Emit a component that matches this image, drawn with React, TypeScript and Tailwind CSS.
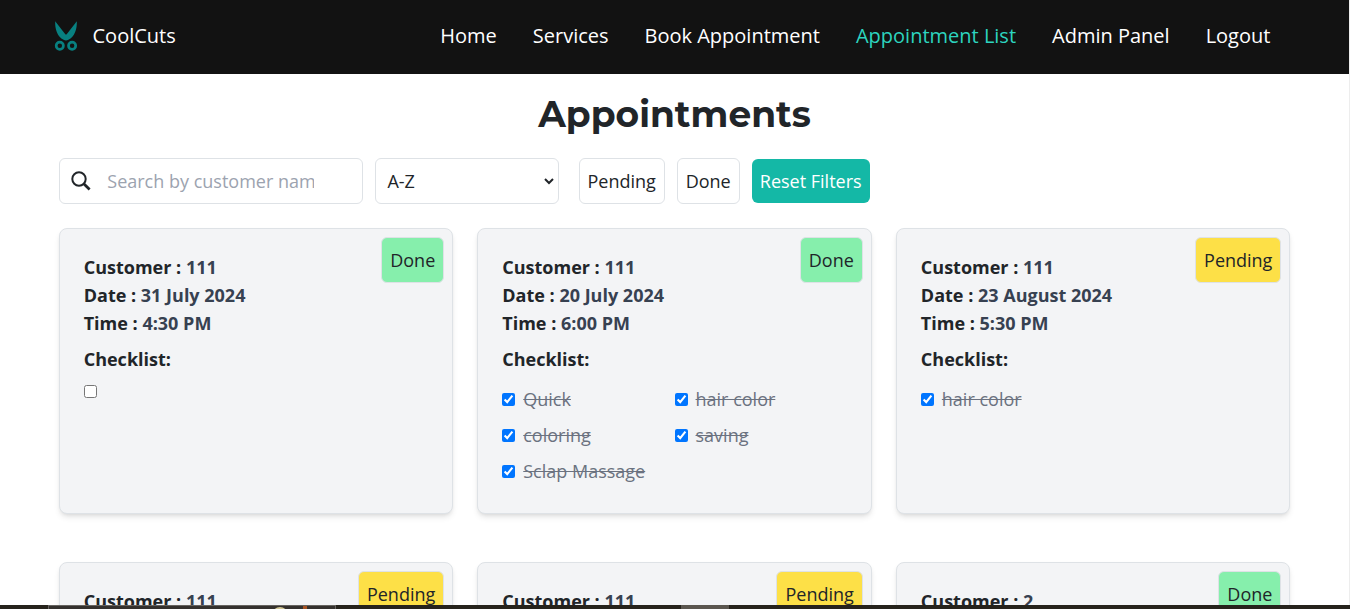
import React from "react";

type Item = { label: string; done: boolean };
type Appointment = {
  customer: string;
  date: string;
  time: string;
  done: boolean;
  items: Item[];
};

const struck = (label: string): Item => ({ label, done: true });

const appointments: Appointment[] = [
  { customer: "111", date: "31 July 2024", time: "4:30 PM", done: true, items: [{ label: "", done: false }] },
  {
    customer: "111",
    date: "20 July 2024",
    time: "6:00 PM",
    done: true,
    items: [struck("Quick"), struck("hair color"), struck("coloring"), struck("saving"), struck("Sclap Massage")],
  },
  { customer: "111", date: "23 August 2024", time: "5:30 PM", done: false, items: [struck("hair color")] },
  { customer: "111", date: "", time: "", done: false, items: [] },
  { customer: "111", date: "", time: "", done: false, items: [] },
  { customer: "2", date: "", time: "", done: true, items: [] },
];

const links = ["Home", "Services", "Book Appointment", "Appointment List", "Admin Panel", "Logout"];

function Logo() {
  return (
    <svg width="24" height="32" viewBox="0 0 24 32" fill="none" className="shrink-0">
      <path d="M1.2 1.2C.8 9 3.4 16.8 9.6 19.8Q12 21 14.4 19.8C20.6 16.8 23.2 9 22.8 1.2L12.9 13.9Q12 15 11.1 13.9Z" fill="#088080" />
      <circle cx="5.8" cy="25.8" r="3.6" stroke="#088080" strokeWidth="2.7" />
      <circle cx="18.1" cy="25.8" r="3.6" stroke="#088080" strokeWidth="2.7" />
    </svg>
  );
}

function SearchIcon() {
  return (
    <svg width="20" height="20" viewBox="0 0 20 20" fill="none" stroke="#212529" className="shrink-0">
      <circle cx="8" cy="8" r="6.7" strokeWidth="2" />
      <path d="M12.8 12.8L18.6 18.4" strokeWidth="2.8" />
    </svg>
  );
}

function Navbar() {
  return (
    <nav className="flex h-[74px] items-center justify-between bg-[#121212] pr-[78.6px] pl-[54px] text-[20px] text-white">
      <div className="flex items-center gap-[14.5px] pb-[3px]">
        <Logo />
        <span>CoolCuts</span>
      </div>
      <ul className="flex gap-9 pb-[3px]">
        {links.map((link) => (
          <li key={link} className={link === "Appointment List" ? "text-[#2dd4bf]" : ""}>
            {link}
          </li>
        ))}
      </ul>
    </nav>
  );
}

function Filters() {
  return (
    <div className="mt-[19px] flex h-[46px] items-center text-[18px]">
      <div className="flex h-[46px] w-[304px] items-center rounded-md border border-[#dee2e6] pl-[11.6px]">
        <SearchIcon />
        <input
          placeholder="Search by customer name"
          className="ml-4 w-[207px] bg-transparent outline-none placeholder:text-[#9ca3af]"
        />
      </div>
      <div className="ml-3 flex h-[46px] w-[184px] items-center justify-between rounded-md border border-[#dee2e6] pr-[4px] pl-[11.7px]">
        <span>A-Z</span>
        <svg width="10" height="7" viewBox="0 0 10 7" fill="none" stroke="#212529" strokeWidth="2">
          <path d="M1 1L5 5L9 1" />
        </svg>
      </div>
      <button className="ml-5 h-[46px] w-[86px] rounded-md border border-[#dee2e6]">Pending</button>
      <button className="ml-3 h-[46px] w-[63px] rounded-md border border-[#dee2e6]">Done</button>
      <button className="ml-3 h-11 w-[118px] whitespace-nowrap rounded-md bg-[#14b8a6] text-white">Reset Filters</button>
    </div>
  );
}

function Checkbox({ checked }: { checked: boolean }) {
  return <input type="checkbox" defaultChecked={checked} className="m-0 size-[13px] shrink-0" />;
}

function Card({ a }: { a: Appointment }) {
  return (
    <article className="relative h-[286px] rounded-lg border border-[#dee2e6] bg-[#f3f4f6] p-6 shadow-md">
      <span
        className={`absolute top-2 right-2 flex h-[46px] items-center rounded-md border border-[#dee2e6] px-2 ${
          a.done ? "bg-[#86efac]" : "bg-[#fde047]"
        }`}
      >
        {a.done ? "Done" : "Pending"}
      </span>
      <div className="font-bold">
        <p>
          Customer : <span className="text-[#374151]">{a.customer}</span>
        </p>
        {a.date && (
          <>
            <p>
              Date : <span className="text-[#374151]">{a.date}</span>
            </p>
            <p>
              Time : <span className="text-[#374151]">{a.time}</span>
            </p>
            <p className="mt-2">Checklist:</p>
          </>
        )}
      </div>
      <ul className="mt-3 grid grid-cols-2 gap-y-2">
        {a.items.map((item, i) => (
          <li key={i} className={item.label ? "flex h-7 items-center gap-2" : "flex h-3 items-center"}>
            <Checkbox checked={item.done} />
            {item.label && <span className="whitespace-nowrap text-[#6b7280] line-through">{item.label}</span>}
          </li>
        ))}
      </ul>
    </article>
  );
}

function BottomStrip() {
  return (
    <div className="absolute inset-x-0 bottom-0 flex h-1 bg-[#26231c]">
      <div className="relative ml-12 h-1 w-72 overflow-hidden border-x border-t border-[#66635f] bg-[#34312e]">
        <div className="absolute top-px left-[223px] h-4 w-4 rounded-full bg-[#d3c898]" />
        <div className="absolute top-0 left-[254px] h-1 w-1 bg-[#a65324]" />
      </div>
      <div className="ml-[345px] h-1 w-12 bg-[#5b564f]" />
    </div>
  );
}

export default function App() {
  return (
    <div className="relative h-[609px] overflow-hidden bg-white font-['Open_Sans','Noto_Sans',sans-serif] text-[18px] leading-7 text-[#212529]">
      <div className="h-full border-r border-[#ededed]">
        <Navbar />
        <main className="pr-[58.6px] pl-[58.7px]">
          <h1 className="mt-[18px] mb-[21px] text-center font-['Montserrat','Inter',sans-serif] text-[36px] leading-[45px] font-bold">
            Appointments
          </h1>
          <Filters />
          <section className="mt-6 grid grid-cols-3 gap-x-6 gap-y-12">
            {appointments.map((a, i) => (
              <Card key={i} a={a} />
            ))}
          </section>
        </main>
      </div>
      <BottomStrip />
    </div>
  );
}
